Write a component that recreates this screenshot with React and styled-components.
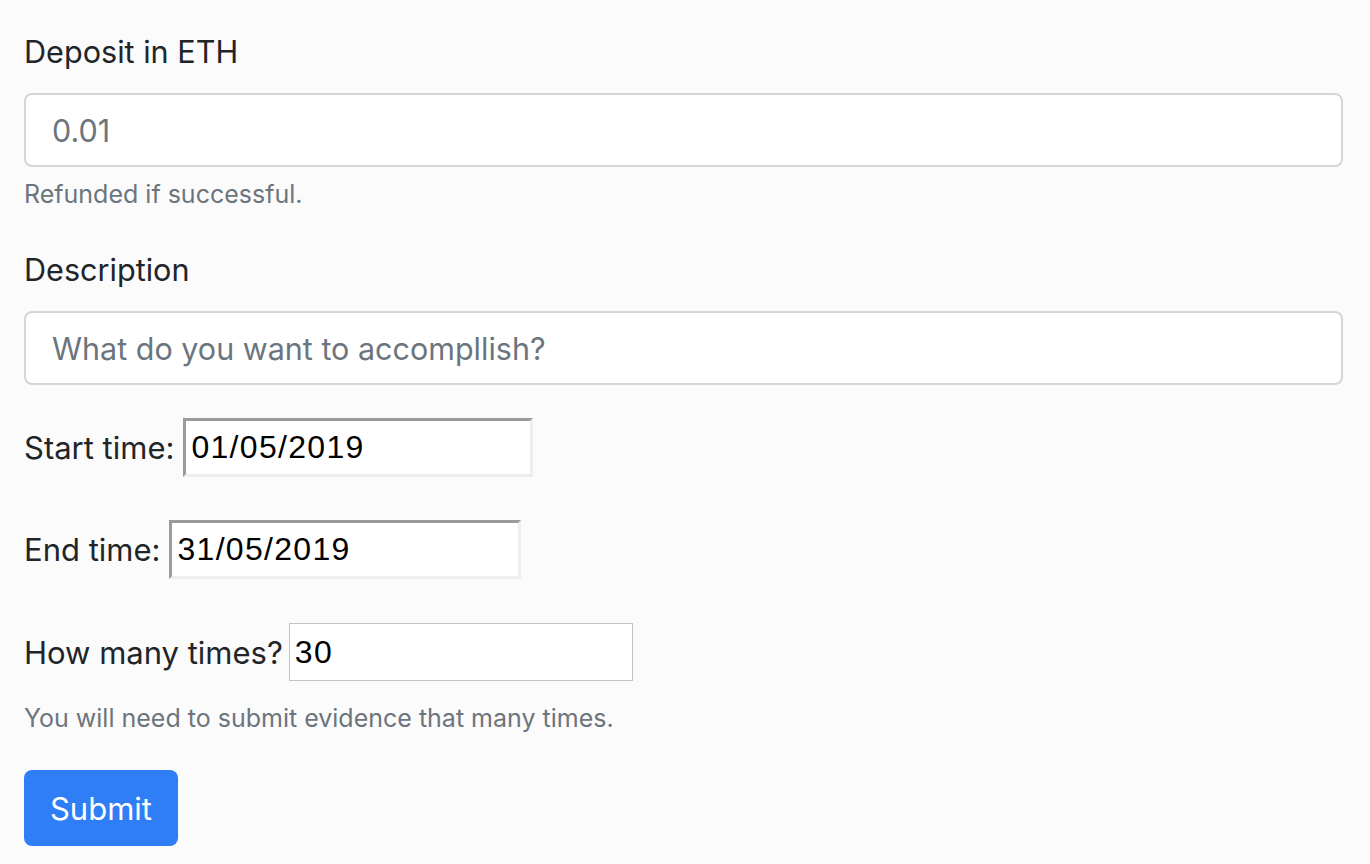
import React from "react";
import styled, { createGlobalStyle } from "styled-components";

const Global = createGlobalStyle`
  html, body {
    margin: 0;
    padding: 0;
    background: #fbfbfb;
  }
  body {
    font-family: Inter, "Noto Sans", "Liberation Sans", sans-serif;
    color: #212529;
  }
`;

const Form = styled.form`
  box-sizing: border-box;
  width: 1370px;
  min-height: 864px;
  padding: 30px 27px 0 24px;
  display: flex;
  flex-direction: column;
`;

const Label = styled.label`
  display: block;
  font-size: 30.6px;
  line-height: 43px;
  color: #212529;
  margin-bottom: 20px;
`;

const TextInput = styled.input`
  box-sizing: border-box;
  width: 100%;
  height: 74px;
  padding: 0 26px;
  font-family: Inter, "Noto Sans", sans-serif;
  font-size: 30.5px;
  color: #495057;
  background: #fff;
  border: 2px solid #d3d7db;
  border-radius: 8px;
  outline: none;
  &::placeholder {
    color: #6c757d;
    opacity: 1;
  }
`;

const Help = styled.small`
  display: block;
  font-size: 25px;
  line-height: 35px;
  color: #6c757d;
  margin-top: ${(p) => p.$mt || 10}px;
`;

const Group = styled.div`
  margin-bottom: ${(p) => p.$mb || 0}px;
`;

const Row = styled.div`
  display: flex;
  align-items: center;
  height: ${(p) => p.$h || 59}px;
  margin-bottom: ${(p) => p.$mb || 0}px;
  font-size: 31px;
  color: #212529;
`;

const RowLabel = styled.span`
  margin-right: ${(p) => p.$gap || 9}px;
  white-space: nowrap;
`;

const LegacyInput = styled.input`
  box-sizing: border-box;
  flex: none;
  width: ${(p) => p.$w}px;
  height: ${(p) => p.$h}px;
  padding: 0 0 0 5px;
  font-family: "Liberation Sans", Arial, sans-serif;
  font-size: 32px;
  letter-spacing: 1.3px;
  color: #000;
  background: #fff;
  outline: none;
  border-radius: 0;
  ${(p) =>
    p.$bevel
      ? `
    border-style: solid;
    border-width: 3px;
    border-color: #9b9b9b #eeeeee #eeeeee #9b9b9b;
  `
      : `
    border: 1px solid #c3c3c3;
  `}
`;

const Button = styled.button`
  align-self: flex-start;
  box-sizing: border-box;
  width: 154px;
  height: 76px;
  margin-top: 34px;
  border: none;
  border-radius: 8px;
  background: #2f7ef6;
  color: #fff;
  font-family: Inter, "Noto Sans", sans-serif;
  font-size: 31px;
  cursor: pointer;
`;

export default function App() {
  return (
    <>
      <Global />
      <Form onSubmit={(e) => e.preventDefault()}>
        <Group $mb={36}>
          <Label>Deposit in ETH</Label>
          <TextInput placeholder="0.01" />
          <Help>Refunded if successful.</Help>
        </Group>
        <Group $mb={33}>
          <Label>Description</Label>
          <TextInput placeholder="What do you want to accompllish?" />
        </Group>
        <Row $mb={43}>
          <RowLabel>Start time:</RowLabel>
          <LegacyInput $bevel $w={350} $h={59} defaultValue="01/05/2019" />
        </Row>
        <Row $mb={44}>
          <RowLabel>End time:</RowLabel>
          <LegacyInput $bevel $w={352} $h={59} defaultValue="31/05/2019" />
        </Row>
        <Row $h={58}>
          <RowLabel $gap={6}>How many times?</RowLabel>
          <LegacyInput $w={344} $h={58} defaultValue="30" />
        </Row>
        <Help $mt={20}>You will need to submit evidence that many times.</Help>
        <Button type="submit">Submit</Button>
      </Form>
    </>
  );
}
